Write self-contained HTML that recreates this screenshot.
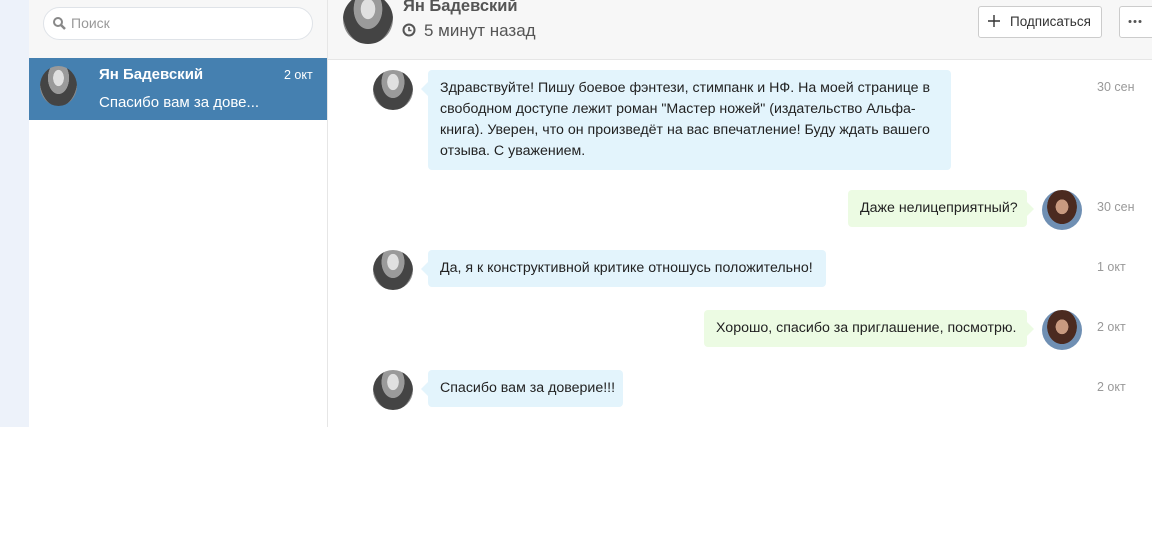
<!DOCTYPE html>
<html><head><meta charset="utf-8"><style>
*{margin:0;padding:0;box-sizing:border-box}
body{width:1152px;height:540px;background:#fff;font-family:"Liberation Sans","DejaVu Sans",sans-serif;position:relative;overflow:hidden;font-size:14px;color:#000}
.abs{position:absolute}
.av{position:absolute;border-radius:50%;background:radial-gradient(ellipse at 50% 30%,#e0e0e0 0 20%,#9a9a9a 21% 40%,#444 41% 72%,#888 73%)}
.me{position:absolute;border-radius:50%;background:radial-gradient(ellipse at 50% 42%,#c99a80 0 22%,#4b2a20 23% 52%,#6f8fb3 53%)}
.b{position:absolute;background:#e3f4fc;border-radius:4px;padding:0 12px;font-size:14.2px;line-height:21px;color:#222;white-space:nowrap}
.g{background:#ecfbe3}
.t{position:absolute;font-size:12.5px;color:#999}
.b::before{content:"";position:absolute;left:-7px;top:12px;border:7px solid transparent;border-left:0;border-right-color:#e3f4fc}
.g::before{left:auto;right:-7px;border-right:0;border-left:7px solid #ecfbe3;border-top:7px solid transparent;border-bottom:7px solid transparent}
</style></head><body>
<div class="abs" style="left:0;top:0;width:29px;height:427px;background:#edf2fa"></div>
<div class="abs" style="left:29px;top:0;width:298px;height:58px;background:#f7f7f7"></div>
<div class="abs" style="left:327px;top:0;width:825px;height:60px;background:#f7f7f7;border-bottom:1px solid #e6e6e6"></div>
<div class="abs" style="left:327px;top:0;width:1px;height:427px;background:#e6e6e6"></div>
<div class="abs" style="left:43px;top:7px;width:270px;height:33px;background:#fff;border:1px solid #dfe3e8;border-radius:17px"></div>
<svg class="abs" style="left:52px;top:16px" width="14" height="14" viewBox="0 0 14 14"><circle cx="6" cy="6" r="4" fill="none" stroke="#888" stroke-width="2"/><path d="M9 9l4 4" stroke="#888" stroke-width="2.5"/></svg>
<div class="abs" style="left:71px;top:15px;color:#999;font-size:14px">Поиск</div>
<div class="abs" style="left:29px;top:58px;width:298px;height:62px;background:#4580b0"></div>
<div class="av" style="left:40px;top:66px;width:37px;height:40px"></div>
<div class="abs" style="left:99px;top:66px;color:#fff;font-weight:bold;font-size:15px">Ян Бадевский</div>
<div class="abs" style="left:284px;top:68px;color:#fff;font-size:12.5px">2 окт</div>
<div class="abs" style="left:99px;top:94px;color:#fff;font-size:15px">Спасибо вам за дове...</div>
<div class="av" style="left:343px;top:-6px;width:50px;height:50px"></div>
<div class="abs" style="left:403px;top:-3px;color:#555;font-weight:bold;font-size:16.5px">Ян Бадевский</div>
<svg class="abs" style="left:402px;top:23px" width="14" height="14" viewBox="0 0 14 14"><circle cx="7" cy="7" r="5.5" fill="none" stroke="#555" stroke-width="2"/><path d="M7 4v3.5h2.5" stroke="#555" stroke-width="1.6" fill="none"/></svg>
<div class="abs" style="left:424px;top:21px;color:#555;font-size:17px">5 минут назад</div>
<div class="abs" style="left:978px;top:6px;width:124px;height:32px;border:1px solid #ccc;border-radius:3px;background:#fff;font-size:13.5px;color:#333;line-height:30px;padding-left:31px">Подписаться</div>
<svg class="abs" style="left:988px;top:15px" width="12" height="12" viewBox="0 0 12 12"><path d="M6 0v12M0 6h12" stroke="#333" stroke-width="1.4"/></svg>
<div class="abs" style="left:1119px;top:6px;width:40px;height:32px;border:1px solid #ccc;border-radius:3px;background:#fff"></div>
<svg class="abs" style="left:1128px;top:19px" width="14" height="5" viewBox="0 0 14 5"><circle cx="2" cy="2.5" r="1.5" fill="#555"/><circle cx="7" cy="2.5" r="1.5" fill="#555"/><circle cx="12" cy="2.5" r="1.5" fill="#555"/></svg>

<div class="av" style="left:373px;top:70px;width:40px;height:40px"></div>
<div class="b" style="left:428px;top:70px;width:523px;height:100px;padding-top:8px;white-space:normal">Здравствуйте! Пишу боевое фэнтези, стимпанк и НФ. На моей странице в свободном доступе лежит роман "Мастер ножей" (издательство Альфа-книга). Уверен, что он произведёт на вас впечатление! Буду ждать вашего отзыва. С уважением.</div>
<div class="t" style="left:1097px;top:80px">30 сен</div>

<div class="b g" style="left:848px;top:190px;width:179px;height:37px;line-height:37px">Даже нелицеприятный?</div>
<div class="me" style="left:1042px;top:190px;width:40px;height:40px"></div>
<div class="t" style="left:1097px;top:200px">30 сен</div>

<div class="av" style="left:373px;top:250px;width:40px;height:40px"></div>
<div class="b" style="left:428px;top:250px;width:398px;height:37px;line-height:37px">Да, я к конструктивной критике отношусь положительно!</div>
<div class="t" style="left:1097px;top:260px">1 окт</div>

<div class="b g" style="left:704px;top:310px;width:323px;height:37px;line-height:37px">Хорошо, спасибо за приглашение, посмотрю.</div>
<div class="me" style="left:1042px;top:310px;width:40px;height:40px"></div>
<div class="t" style="left:1097px;top:320px">2 окт</div>

<div class="av" style="left:373px;top:370px;width:40px;height:40px"></div>
<div class="b" style="left:428px;top:370px;width:195px;height:37px;line-height:37px">Спасибо вам за доверие!!!</div>
<div class="t" style="left:1097px;top:380px">2 окт</div>
</body></html>
